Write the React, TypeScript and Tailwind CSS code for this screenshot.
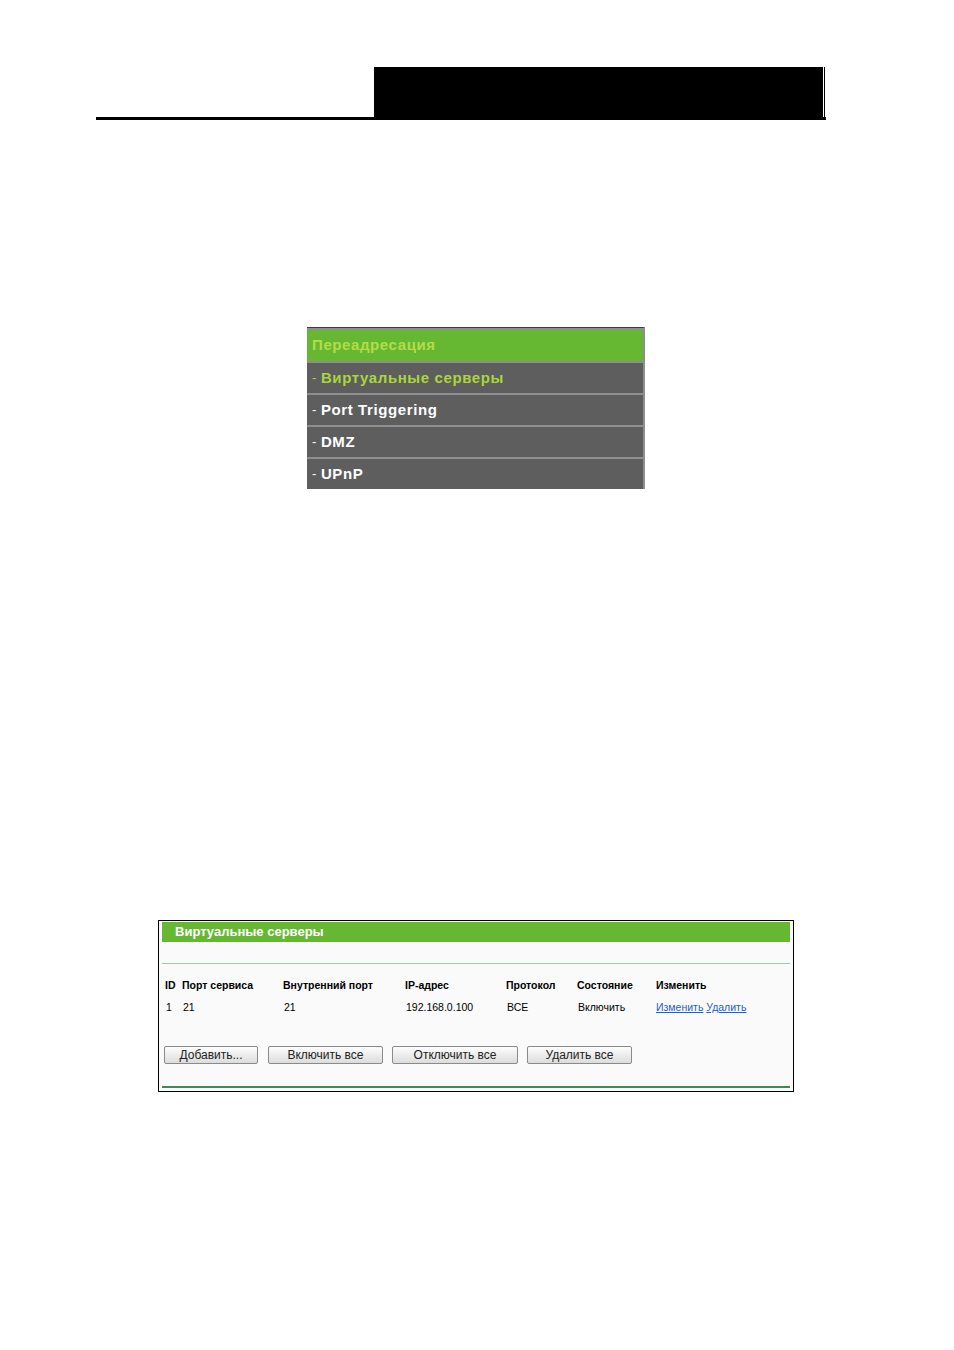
const font = { fontFamily: '"Liberation Sans", Arial, sans-serif' };

const menuItems = [
  { label: "Виртуальные серверы", active: true },
  { label: "Port Triggering", active: false },
  { label: "DMZ", active: false },
  { label: "UPnP", active: false },
];

const heads = ["ID", "Порт сервиса", "Внутренний порт", "IP-адрес", "Протокол", "Состояние", "Изменить"];
const row = ["1", "21", "21", "192.168.0.100", "ВСЕ", "Включить"];

const buttons = [
  { label: "Добавить...", w: "w-[94px]" },
  { label: "Включить все", w: "w-[115px]" },
  { label: "Отключить все", w: "w-[126px]" },
  { label: "Удалить все", w: "w-[105px]" },
];

export default function App() {
  return (
    <div className="w-[954px] h-[1350px] bg-white overflow-hidden" style={font}>
      {/* page header bar */}
      <div className="ml-[96px] mt-[67px] w-[730px] flex items-end border-b-[3px] border-black">
        <div className="flex-1" />
        <div className="w-[449px] h-[50px] bg-black" />
        <div className="w-px h-[50px] bg-white" />
        <div className="w-px h-[50px] bg-black" />
        <div className="w-px" />
      </div>

      {/* forwarding menu */}
      <div className="ml-[307px] mt-[207px] w-[338px] border-t border-[#3c3c3c] border-r-2 border-r-[#8e8e8e] bg-[#8e8e8e] pt-[2px]">
        <div className="h-[31px] bg-[#66b832] flex items-center pl-[5px] text-[15px] font-bold tracking-[0.6px] text-[#b4dc4a]">
          Переадресация
        </div>
        {menuItems.map((m) => (
          <div
            key={m.label}
            className={`h-[30px] mt-[2px] bg-[#5e5e5e] flex items-center pl-[5px] text-[15px] font-bold tracking-[0.6px] ${m.active ? "text-[#a8d63c]" : "text-white"}`}
          >
            <span className="font-normal mr-[4px] text-[13px]">-</span>
            {m.label}
          </div>
        ))}
      </div>

      {/* virtual servers panel */}
      <div className="ml-[158px] mt-[431px] w-[636px] border border-black bg-[#fafafa] px-[3px] pt-[1px] pb-[3px]">
        <div className="h-[20px] bg-[#66b832] flex items-center pl-[13px] text-[13px] font-bold text-white">
          Виртуальные серверы
        </div>
        <div className="mt-[21px] h-px bg-[#9fcaae]" />
        <div className="pl-[3px] mt-[14px] grid grid-cols-[17px_101px_122px_101px_71px_79px_1fr] text-[10.5px] text-black">
          {heads.map((h) => (
            <div key={h} className="font-bold h-[22px] leading-[14px]">{h}</div>
          ))}
          {row.map((c, i) => (
            <div key={i} className="leading-[14px] pl-[1px]">{c}</div>
          ))}
          <div className="leading-[14px] text-[#1b5fd6]">
            <span className="underline">Изменить</span> <span className="underline">Удалить</span>
          </div>
        </div>
        <div className="mt-[32px] pl-[2px] flex">
          {buttons.map((b, i) => (
            <div
              key={b.label}
              className={`${b.w} ${i === 0 ? "" : i === 1 ? "ml-[10px]" : "ml-[9px]"} h-[18px] rounded-[2px] border border-[#8a8a8a] bg-gradient-to-b from-[#fdfdfd] to-[#dcdcdc] flex items-center justify-center text-[12px] text-[#222]`}
            >
              {b.label}
            </div>
          ))}
        </div>
        <div className="mt-[22px] h-[2px] bg-[#3c8a55]" />
      </div>
    </div>
  );
}
